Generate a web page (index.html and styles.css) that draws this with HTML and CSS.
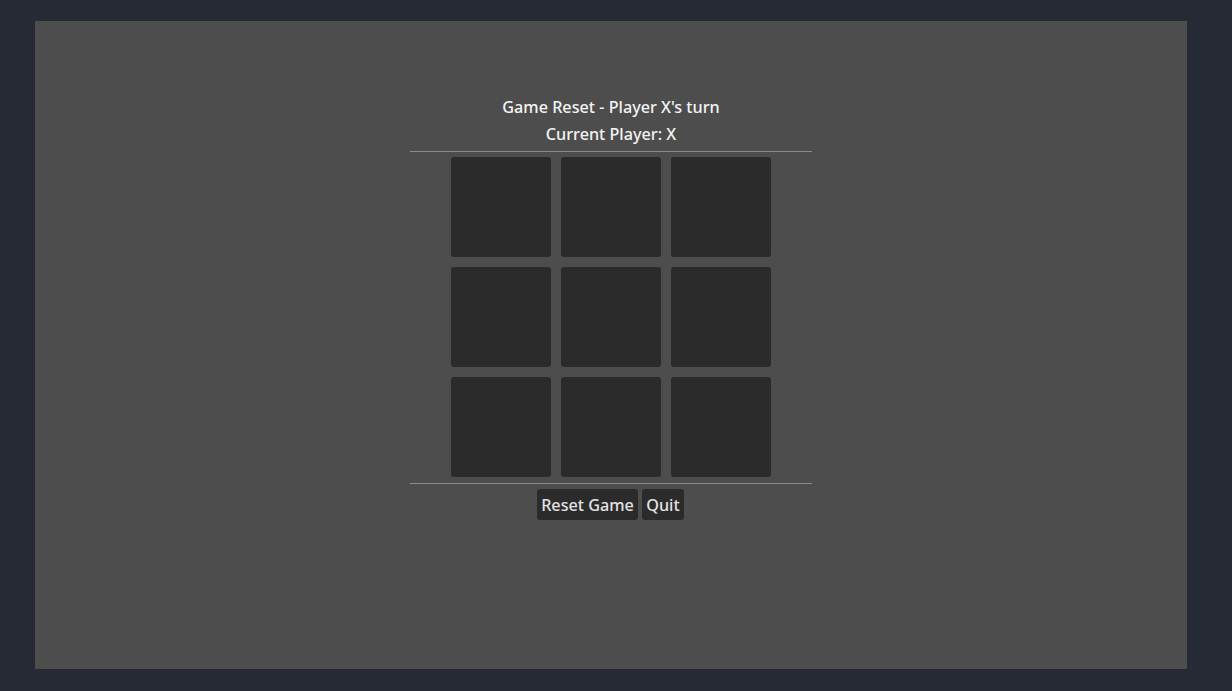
FILE: index.html
```html
<!DOCTYPE html>
<html lang="en">
<head>
<meta charset="utf-8">
<title>Tic Tac Toe</title>
<link rel="stylesheet" href="styles.css">
</head>
<body>
<main class="panel">
  <section class="game">
    <div class="label">Game Reset - Player X's turn</div>
    <div class="label">Current Player: X</div>
    <div class="sep sep-top"></div>
    <div class="board">
      <button class="cell"></button>
      <button class="cell"></button>
      <button class="cell"></button>
      <button class="cell"></button>
      <button class="cell"></button>
      <button class="cell"></button>
      <button class="cell"></button>
      <button class="cell"></button>
      <button class="cell"></button>
    </div>
    <div class="sep sep-bottom"></div>
    <div class="actions">
      <button class="btn btn-reset">Reset Game</button>
      <button class="btn btn-quit">Quit</button>
    </div>
  </section>
</main>
</body>
</html>
```
FILE: styles.css
```css
html, body {
  margin: 0;
  padding: 0;
}
body {
  background: #252a35;
  width: 1232px;
  height: 691px;
  padding: 21px 45px 22px 35px;
  box-sizing: border-box;
  font-family: "Noto Sans", "Open Sans", sans-serif;
}
.panel {
  width: 1152px;
  height: 648px;
  background: #4d4d4d;
  display: flex;
  justify-content: center;
  padding-top: 75px;
  box-sizing: border-box;
}
.game {
  width: 402px;
  display: flex;
  flex-direction: column;
  align-items: center;
}
.label {
  height: 23px;
  line-height: 23px;
  font-size: 16.2px;
  font-weight: 500;
  color: #f4f4f4;
  text-align: center;
  width: 100%;
}
.label + .label {
  margin-top: 4px;
}
.sep {
  width: 100%;
  height: 1px;
  background: #8a8a8a;
}
.sep-top {
  margin-top: 5px;
}
.board {
  margin-top: 5px;
  display: grid;
  grid-template-columns: repeat(3, 100px);
  grid-template-rows: repeat(3, 100px);
  gap: 10px;
}
.cell {
  border: none;
  margin: 0;
  padding: 0;
  background: #2b2b2b;
  border-radius: 3px;
}
.sep-bottom {
  margin-top: 6px;
}
.actions {
  margin-top: 5px;
  margin-right: 1px;
  display: flex;
  gap: 4px;
}
.btn {
  height: 31px;
  border: none;
  margin: 0;
  padding: 0;
  background: #2b2b2b;
  border-radius: 3px;
  color: #e2e2e2;
  font-family: "Noto Sans", "Open Sans", sans-serif;
  font-size: 16.2px;
  font-weight: 500;
  line-height: 32px;
}
.btn-reset {
  width: 101px;
}
.btn-quit {
  width: 42px;
}
```
